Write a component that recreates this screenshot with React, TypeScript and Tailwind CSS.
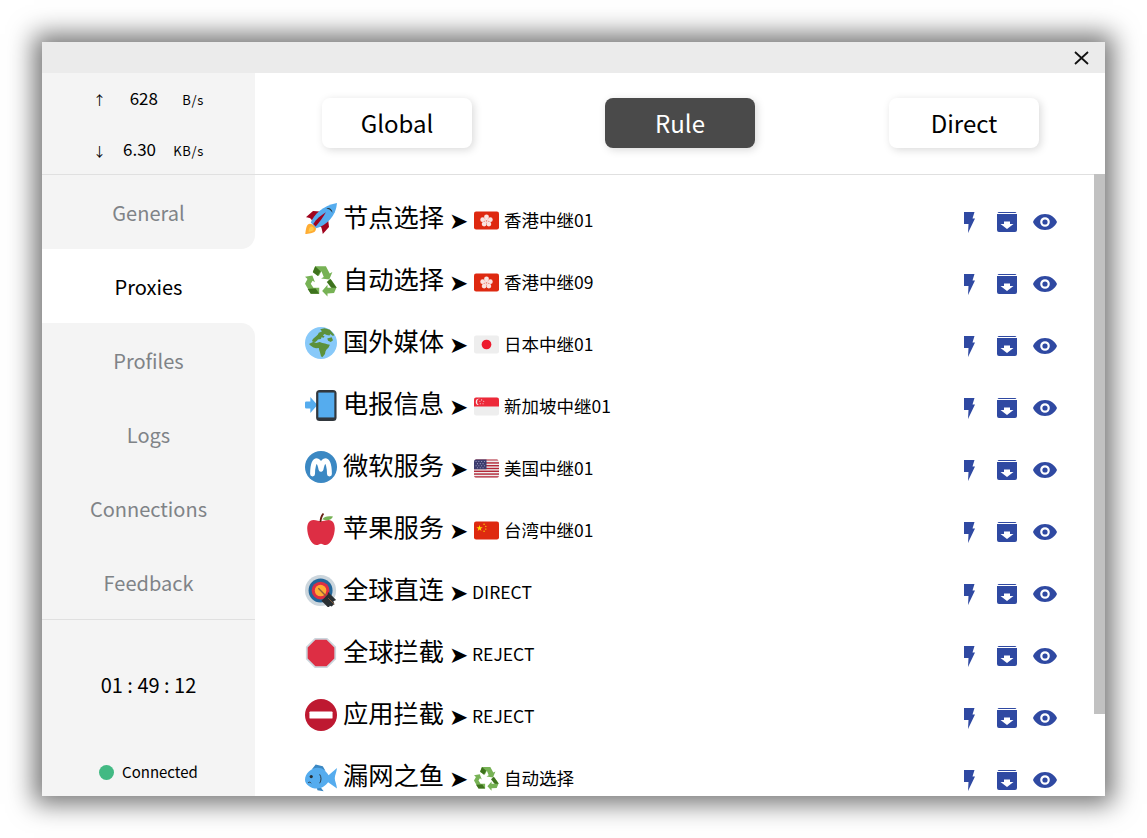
import React from "react";

const Rocket = () => (
  <svg viewBox="0 0 36 36" className="w-full h-full">
    <path fill="#A0041E" d="M1 16l8-7 16 1 2 17-7 8s-1-7-2-8-5-2-5-2-4-1-5-5-7-4-7-4z" />
    <path fill="#FFAC33" d="M3 24.500C1 26.500.4 35 .4 35s8.500-.6 10.500-2.600c2.200-2.300 1.800-4.600 0-6.400-1.900-1.800-5.600-3.800-7.900-1.500z" />
    <path fill="#FFCC4D" d="M5.500 27.500c-1 1-1.500 5-1.500 5s4-.5 5-1.500c1.300-1.300 1.200-2.700-.1-3.700-1-1-2.400-1.100-3.400.2z" />
    <path fill="#55ACEE" d="M12.500 28.500L6.500 22C10 13 20 3 36 0c-1 15-12 25-23.500 28.500z" />
    <path fill="#292F33" d="M24 6c3.500-1.200 6.500 1 7 5-1.800-2.500-4-4.300-7-5z" />
    <path fill="#A0041E" d="M12 26.500l-2.700-3C13 18 18 14 23.500 10.500 20.500 16 17 21 12 26.500z" />
  </svg>
);

const Recycle = () => (
  <svg viewBox="0 0 36 36" className="w-full h-full">
    <path fill="#77B255" d="M11.500 1.500h12l4.300 8 3-1.700-3.500 8.600-9.200-1.300 3-1.700L18.500 7l-3 5.500-6.700-4z" />
    <path fill="#3E721D" d="M11.500 1.500l6 5.500-3.200 5.500L8.800 8z" />
    <path fill="#77B255" d="M8.300 11.800L0 13.300l2.800 2.500L0 21l3.600 6.300 2.900 5h9.500v-6.800H9.500l-3-4.500 2-3.200 2.700 1.500z" />
    <path fill="#3E721D" d="M3 27l3.500 5.300H16l-4-5.800H8.800z" />
    <path fill="#77B255" d="M29.500 16.500l6 8.500-2.800 6.500-7.400.7v3.300l-6-6.300 6-7v3.400h4.500l2.500-3.800-5.500-3z" />
    <path fill="#3E721D" d="M28.500 15.500l7 10H29.500l-5-6.500z" />
  </svg>
);

const Globe = () => (
  <svg viewBox="0 0 36 36" className="w-full h-full">
    <circle cx="18" cy="18" r="18" fill="#88C9F9" />
    <path fill="#5C913B" d="M17 2.500l5-1 6 1.500 5 6-1.500 1-3-2-1 1.500-3-.5-2.500-1-2 1.500 2 1-1 1.500-2.500-.5-.5 2-3.500 .5-1 1.500-2 1.500-3-.5-.5-1.500 1.500-2 3-2.500 2-2 1-2 3.500-1.500-1-1.500z" />
    <path fill="#5C913B" d="M4.500 19l5-2.500 3 1.500 4-1 3 1 3 .5 2.500 1 3 .5-1.500 3-2.500 2.500-1 2-.5 3-3 3.500-1.500-1-1-4-1-3-.5-2.500-3 .5-3-1-3-2z" />
    <path fill="#5C913B" d="M25 13l5-1.500 1.500 3.500-2.500 2-3-1.500z" />
  </svg>
);

const Phone = () => (
  <svg viewBox="0 0 36 36" className="w-full h-full">
    <path fill="#55ACEE" d="M1.500 14H6V9l8 9-8 9v-5H1.500A1.500 1.500 0 010 20.500v-5A1.500 1.500 0 011.500 14z" />
    <rect x="12.500" y="1" width="23" height="35" rx="4" fill="#31373D" />
    <rect x="15" y="4" width="18" height="28" fill="#55ACEE" />
  </svg>
);

const Metro = () => (
  <svg viewBox="0 0 36 36" className="w-full h-full">
    <circle cx="18" cy="18" r="18" fill="#3B88C3" />
    <path fill="none" stroke="#FFF" strokeWidth="5.500" strokeLinecap="round" strokeLinejoin="round" d="M8.500 26c0-7 1.500-15 4.800-15 3 0 4.700 9.500 4.700 9.500s1.700-9.500 4.700-9.500c3.300 0 4.800 8 4.800 15" />
  </svg>
);

const Apple = () => (
  <svg viewBox="0 0 36 36" className="w-full h-full">
    <path fill="#DD2E44" d="M26.500 8c-3.500 0-6.500 1.500-8.500 1.500S13 8 9.500 8C4.500 8 2.500 12.500 2.500 17.500 2.500 25 7 36 12.500 36c2.500 0 4-1.500 5.500-1.500s3 1.500 5.500 1.500C29 36 33.500 25 33.500 17.500c0-5-2-9.500-7-9.500z" />
    <path fill="#77B255" d="M19.500 7c2-3 6-4 12-3-1.500 3.500-6 5.500-12 3z" />
    <path fill="#662113" d="M16.500 10c0-3.500 .8-7 3.500-10l1.500 1C19.500 4 18.500 7 18.500 10z" />
  </svg>
);

const Target = () => (
  <svg viewBox="0 0 36 36" className="w-full h-full">
    <circle cx="17.500" cy="17.500" r="17.500" fill="#CCD6DD" />
    <circle cx="17.500" cy="17.500" r="13.500" fill="#269" />
    <circle cx="17.500" cy="17.500" r="10" fill="#DD2E44" />
    <circle cx="17.500" cy="17.500" r="6.500" fill="#FFAC33" />
    <path stroke="#8B5E3C" strokeWidth="1.500" d="M15 15l14 14" />
    <path fill="#292F33" d="M22 25.500l3.500-3.500 .5-3 9 9-3 1.500 1 3-3 3-2-1-1.500 2.500-8-8z" />
    <path stroke="#8B5E3C" strokeWidth="1" d="M26 26l7 7" />
  </svg>
);

const Stop = () => (
  <svg viewBox="0 0 36 36" className="w-full h-full">
    <path fill="#CCD6DD" d="M11 1h14l10 10v14L25 35H11L1 25V11z" />
    <path fill="#DD2E44" d="M11.800 3h12.400L33 11.800v12.400L24.200 33H11.800L3 24.200V11.800z" />
  </svg>
);

const NoEntry = () => (
  <svg viewBox="0 0 36 36" className="w-full h-full">
    <circle cx="18" cy="18" r="18" fill="#BE1931" />
    <rect x="5" y="14" width="26" height="8" fill="#FFF" rx="1" />
  </svg>
);

const Fish = () => (
  <svg viewBox="0 0 36 36" className="w-full h-full">
    <path fill="#3B88C3" d="M8 9l4-5 8 2 3 5z M13 29l5 1 3 4-7-1z" />
    <path fill="#55ACEE" d="M0 21c0-7 7-13.500 14-13.500 6 0 10 4 12.500 8.500L36 8c-.5 5-2.500 8.500-2.500 11.500 0 3 2 7 2.500 11.500l-10-7C23 28 18.500 31 14 31 6 31 0 26 0 21z" />
    <circle cx="7" cy="17.500" r="1.800" fill="#292F33" />
    <path fill="none" stroke="#292F33" strokeWidth="1" d="M3.500 24.500c1-1 2.500-1 3.500.5 M16.500 15c2 3 2 7 0 10" />
  </svg>
);

const FlagHK = () => (
  <svg viewBox="0 0 36 26" className="w-full h-full">
    <rect width="36" height="26" rx="3" fill="#DE2910" />
    <g fill="#F9E4E1">
      <circle cx="18" cy="7.800" r="3.500" />
      <circle cx="23.500" cy="11.800" r="3.500" />
      <circle cx="21.400" cy="18.200" r="3.500" />
      <circle cx="14.600" cy="18.200" r="3.500" />
      <circle cx="12.500" cy="11.800" r="3.500" />
      <circle cx="18" cy="13.500" r="3" />
    </g>
    <circle cx="18" cy="13.500" r="1.200" fill="#DE2910" opacity=".5" />
  </svg>
);

const FlagJP = () => (
  <svg viewBox="0 0 36 26" className="w-full h-full">
    <rect width="36" height="26" rx="3" fill="#EEEEEE" />
    <circle cx="18" cy="13" r="7" fill="#ED1B2E" />
  </svg>
);

const FlagSG = () => (
  <svg viewBox="0 0 36 26" className="w-full h-full">
    <rect width="36" height="26" rx="3" fill="#EEEEEE" />
    <path fill="#ED2939" d="M3 0h30a3 3 0 013 3v10H0V3a3 3 0 013-3z" />
    <circle cx="7" cy="6.500" r="4.500" fill="#EEE" />
    <circle cx="9" cy="6.500" r="4.500" fill="#ED2939" />
    <g fill="#EEE">
      <circle cx="11" cy="3.500" r=".8" /><circle cx="14" cy="5.500" r=".8" /><circle cx="13" cy="9" r=".8" /><circle cx="9" cy="9" r=".8" /><circle cx="8.500" cy="5.500" r=".8" />
    </g>
  </svg>
);

const FlagUS = () => (
  <svg viewBox="0 0 36 26" className="w-full h-full">
    <rect width="36" height="26" rx="3" fill="#EEE" />
    <g fill="#B22334">
      <path d="M3 0h30a3 3 0 012 1.500H1A3 3 0 013 0z" />
      <rect y="4" width="36" height="2" />
      <rect y="8" width="36" height="2" />
      <rect y="12" width="36" height="2" />
      <rect y="16" width="36" height="2" />
      <rect y="20" width="36" height="2" />
      <path d="M0 24h36a3 3 0 01-3 2H3a3 3 0 01-3-2z" />
    </g>
    <path fill="#3C3B6E" d="M3 0h15v14H0V3a3 3 0 013-3z" />
    <g fill="#A9A9C9">
      <circle cx="3" cy="3" r=".8" /><circle cx="7" cy="3" r=".8" /><circle cx="11" cy="3" r=".8" /><circle cx="15" cy="3" r=".8" />
      <circle cx="5" cy="6" r=".8" /><circle cx="9" cy="6" r=".8" /><circle cx="13" cy="6" r=".8" />
      <circle cx="3" cy="9" r=".8" /><circle cx="7" cy="9" r=".8" /><circle cx="11" cy="9" r=".8" /><circle cx="15" cy="9" r=".8" />
      <circle cx="5" cy="12" r=".8" /><circle cx="9" cy="12" r=".8" /><circle cx="13" cy="12" r=".8" />
    </g>
  </svg>
);

const FlagCN = () => (
  <svg viewBox="0 0 36 26" className="w-full h-full">
    <rect width="36" height="26" rx="3" fill="#DE2910" />
    <path fill="#FFDE02" d="M8 5l1.100 3.300h3.400l-2.800 2 1.100 3.300L8 11.600l-2.800 2 1.100-3.300-2.800-2h3.400z" />
    <g fill="#FFDE02">
      <circle cx="14.500" cy="4" r="1" /><circle cx="17" cy="7" r="1" /><circle cx="17" cy="11" r="1" /><circle cx="14.500" cy="14" r="1" />
    </g>
  </svg>
);

const Bolt = () => (
  <svg viewBox="0 0 12 21" className="w-[12px] h-[21px] fill-[#2F49A2]">
    <path d="M1 0H11.500L9.500 6.500H12L5 21 5.500 12H1z" />
  </svg>
);

const Box = () => (
  <svg viewBox="0 0 20 20" className="w-[20px] h-[20px]">
    <path fill="#2F49A2" d="M2 0h16a1.500 1.500 0 011.400 1H.6A1.500 1.500 0 012 0zM0 2h20v16a2 2 0 01-2 2H2a2 2 0 01-2-2z" />
    <path fill="#FFF" d="M7 9.500h6v2.500h3.500L10 17 3.500 12H7z" />
  </svg>
);

const Eye = () => (
  <svg viewBox="0 0 24 16" className="w-[24px] h-[16px]">
    <path fill="#2F49A2" fillRule="evenodd" d="M12 0c5.500 0 10 3.300 12 8-2 4.700-6.500 8-12 8S2 12.700 0 8c2-4.700 6.500-8 12-8zm0 3.200a4.800 4.800 0 100 9.600 4.800 4.800 0 000-9.600z" />
    <circle cx="12" cy="8" r="2.600" fill="#2F49A2" />
  </svg>
);

const rows: { icon: React.ReactNode; name: string; flag?: React.ReactNode; target: string }[] = [
  { icon: <Rocket />, name: "节点选择", flag: <FlagHK />, target: "香港中继01" },
  { icon: <Recycle />, name: "自动选择", flag: <FlagHK />, target: "香港中继09" },
  { icon: <Globe />, name: "国外媒体", flag: <FlagJP />, target: "日本中继01" },
  { icon: <Phone />, name: "电报信息", flag: <FlagSG />, target: "新加坡中继01" },
  { icon: <Metro />, name: "微软服务", flag: <FlagUS />, target: "美国中继01" },
  { icon: <Apple />, name: "苹果服务", flag: <FlagCN />, target: "台湾中继01" },
  { icon: <Target />, name: "全球直连", target: "DIRECT" },
  { icon: <Stop />, name: "全球拦截", target: "REJECT" },
  { icon: <NoEntry />, name: "应用拦截", target: "REJECT" },
  { icon: <Fish />, name: "漏网之鱼", flag: <Recycle />, target: "自动选择" },
];

const nav = ["General", "Proxies", "Profiles", "Logs", "Connections", "Feedback"];

export default function App() {
  return (
    <div className="w-[1147px] h-[838px] p-[42px] bg-white overflow-hidden font-['Noto_Sans_CJK_SC','Noto_Sans',sans-serif]">
      <div className="w-[1063px] h-[754px] flex flex-col bg-white shadow-[0_0_24px_8px_rgba(0,0,0,0.55)]">
        <div className="h-[31px] shrink-0 bg-[#ebebeb] flex items-center justify-end pr-[16px]">
          <svg viewBox="0 0 15 14" className="w-[15px] h-[14px]">
            <path d="M1 1l13 12M14 1L1 13" stroke="#111" strokeWidth="1.800" fill="none" />
          </svg>
        </div>
        <div className="flex-1 min-h-0 flex">
          <aside className="w-[213px] shrink-0 bg-[#f4f4f4] flex flex-col">
            <div className="h-[102px] shrink-0 border-b border-[#e0e0e0] flex flex-col text-black">
              <div className="h-[51px] flex items-center">
                <span className="w-[64px] text-right text-[13px] leading-none mt-[2px]">↑</span>
                <span className="w-[52px] text-right text-[17px] leading-none -mt-[2px]">628</span>
                <span className="w-[46px] text-right text-[13px] tracking-[0.05em] leading-none mt-[2px]">B/s</span>
              </div>
              <div className="h-[51px] flex items-center -mt-[1px]">
                <span className="w-[64px] text-right text-[13px] leading-none mt-[4px]">↓</span>
                <span className="w-[50px] text-right text-[17px] leading-none">6.30</span>
                <span className="w-[48px] text-right text-[13px] tracking-[0.05em] leading-none mt-[4px]">KB/s</span>
              </div>
            </div>
            <div className="bg-white">
              <div className="h-[74px] pt-[2px] bg-[#f4f4f4] rounded-br-[14px] flex items-center justify-center text-[20px] text-[#7f8387]">{nav[0]}</div>
              <div className="h-[74px] pt-[2px] flex items-center justify-center text-[20px] text-black">{nav[1]}</div>
              <div className="h-[74px] pt-[2px] bg-[#f4f4f4] rounded-tr-[14px] flex items-center justify-center text-[20px] text-[#7f8387]">{nav[2]}</div>
            </div>
            {nav.slice(3).map((n) => (
              <div key={n} className="h-[74px] pt-[2px] flex items-center justify-center text-[20px] text-[#7f8387]">{n}</div>
            ))}
            <div className="flex-1 border-t border-[#e0e0e0] flex flex-col items-center">
              <div className="mt-[49px] text-[20px] leading-[32px] text-black">01 : 49 : 12</div>
              <div className="mt-[60px] flex items-center gap-[8px] text-[15px] leading-[22px] text-black">
                <span className="w-[15px] h-[15px] rounded-full bg-[#42b983]" />
                Connected
              </div>
            </div>
          </aside>
          <main className="flex-1 min-w-0 flex flex-col">
            <div className="h-[102px] shrink-0 border-b border-[#e0e0e0] flex items-center pl-[67px] gap-[133px] pb-[1px]">
              <div className="w-[150px] h-[50px] rounded-[8px] bg-white shadow-[2px_2px_8px_rgba(0,0,0,0.15)] flex items-center justify-center text-[24px] text-black">Global</div>
              <div className="w-[150px] h-[50px] rounded-[8px] bg-[#4a4a4a] shadow-[2px_2px_8px_rgba(0,0,0,0.15)] flex items-center justify-center text-[24px] text-white">Rule</div>
              <div className="ml-[1px] w-[150px] h-[50px] rounded-[8px] bg-white shadow-[2px_2px_8px_rgba(0,0,0,0.15)] flex items-center justify-center text-[24px] text-black">Direct</div>
            </div>
            <div className="flex-1 min-h-0 flex overflow-hidden -mt-px">
              <div className="flex-1 min-w-0 pt-[15px] overflow-hidden">
                {rows.map((r) => (
                  <div key={r.name} className="h-[62px] shrink-0 flex items-center pl-[50px] pr-[37px]">
                    <span className="w-[32px] h-[32px] shrink-0 -mt-[2px]">{r.icon}</span>
                    <span className="ml-[6px] text-[25.250px] leading-[32px] text-black -mt-[8px]">{r.name}</span>
                    <span className="ml-[5px] text-[23px] leading-[24px] text-black -mt-[2px]">➤</span>
                    {r.flag ? (
                      <>
                        <span className="ml-[6px] w-[25px] h-[25px] flex items-center shrink-0">{r.flag}</span>
                        <span className="ml-[5px] text-[17.500px] leading-[24px] text-black">{r.target}</span>
                      </>
                    ) : (
                      <span className="ml-[4px] text-[17.500px] leading-[24px] text-black">{r.target}</span>
                    )}
                    <div className="ml-auto flex items-center mt-[4px]">
                      <Bolt />
                      <span className="ml-[22px]"><Box /></span>
                      <span className="ml-[16px]"><Eye /></span>
                    </div>
                  </div>
                ))}
              </div>
              <div className="w-[11px] shrink-0">
                <div className="h-[540px] bg-[#c1c1c1]" />
              </div>
            </div>
          </main>
        </div>
      </div>
    </div>
  );
}
